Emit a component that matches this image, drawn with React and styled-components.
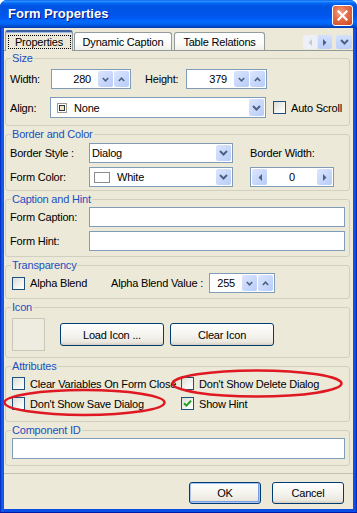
import React from "react";
import styled, { createGlobalStyle } from "styled-components";

const GlobalStyle = createGlobalStyle`
  html, body { margin: 0; padding: 0; background: #ffffff; }
  body {
    font-family: "Liberation Sans", Arial, sans-serif;
    font-size: 11px;
    color: #000;
    letter-spacing: -0.2px;
  }
  *, *::before, *::after { box-sizing: border-box; }
`;

const Window = styled.div`
  position: relative;
  width: 357px;
  height: 513px;
  display: flex;
  flex-direction: column;
  background: linear-gradient(to right, #0019a8 0, #0a4ee4 1px, #1a5ef0 3px, #0a4ee4 4px, #0a4ee4 353px, #1553e8 354px, #0a46d8 356px, #0019a8 357px);
  border-radius: 7px 7px 0 0;
  overflow: hidden;
  box-shadow: inset 0 -1px #0019a8;
`;

const TitleBar = styled.div`
  height: 28px;
  flex: none;
  display: flex;
  align-items: flex-start;
  justify-content: space-between;
  padding: 0 4px 0 8px;
  background: linear-gradient(
    to bottom,
    #0058ee 0%, #3593ff 4%, #288eff 6%, #127dff 8%, #036ffc 10%,
    #0262ee 14%, #0057e5 20%, #0054e3 24%, #0055eb 56%, #005bf5 66%,
    #026afe 76%, #0062ef 86%, #0052d6 92%, #0046c4 96%, #003ab0 100%
  );
`;

const TitleText = styled.div`
  margin-top: 6px;
  font-size: 13px;
  font-weight: bold;
  line-height: 16px;
  letter-spacing: 0;
  color: #ffffff;
  text-shadow: 1px 1px 0 #0a1883;
`;

const CloseButton = styled.div`
  margin-top: 5px;
  width: 21px;
  height: 21px;
  border: 1px solid #ffffff;
  border-radius: 3px;
  background: radial-gradient(circle at 40% 35%, #f3a58c 0%, #e4704c 40%, #cc4520 100%);
  display: flex;
  align-items: center;
  justify-content: center;
`;

const Client = styled.div`
  flex: 1;
  margin: 0 4px 4px;
  background: #ece9d8;
  display: flex;
  flex-direction: column;
`;

const TabStrip = styled.div`
  height: 22px;
  flex: none;
  display: flex;
  align-items: flex-end;
  padding: 0 1px 0 1px;
  position: relative;
  z-index: 1;
`;

const Tab = styled.div`
  flex: none;
  width: ${(p) => p.$w}px;
  height: ${(p) => (p.$active ? 21 : 18)}px;
  margin-left: ${(p) => p.$ml || 0}px;
  margin-bottom: ${(p) => (p.$active ? -1 : 0)}px;
  border: 1px solid #919b9c;
  border-bottom: none;
  border-radius: 3px 3px 0 0;
  background: ${(p) =>
    p.$active ? "#ece9d8" : "linear-gradient(#ffffff, #fbfbf9 60%, #f0efe9)"};
  display: flex;
  align-items: center;
  justify-content: center;
  white-space: nowrap;
  ${(p) =>
    p.$active &&
    `border-top: 2px solid #3c62a6; box-shadow: inset 0 1px #9db8e6; padding-top: 0;`}
`;

const FocusBox = styled.div`
  width: 63px;
  height: 14px;
  border: 1px dotted #000;
  display: flex;
  align-items: center;
  justify-content: center;
  line-height: 12px;
`;

const ScrollGroup = styled.div`
  margin-left: auto;
  margin-bottom: 1px;
  display: flex;
  gap: 1px;
`;

const ScrollBtn = styled.div`
  width: ${(p) => p.$w}px;
  height: 14px;
  margin-left: ${(p) => p.$ml || 0}px;
  border-radius: 2px;
  background: ${(p) =>
    p.$disabled ? "#eef0f7" : "linear-gradient(#d3e0fd, #bccffa)"};
  display: flex;
  align-items: center;
  justify-content: center;
`;

const Panel = styled.div`
  flex: none;
  height: 424px;
  border-top: 1px solid #919b9c;
  border-bottom: 1px solid #c4c1b2;
  padding: 1px 3px 7px 1px;
  display: flex;
  flex-direction: column;
  gap: 2px;
`;

const Group = styled.fieldset`
  margin: 0;
  padding: 0;
  min-width: 0;
  border: 1px solid #d0d0bf;
  border-radius: 3px;
`;

const Legend = styled.legend`
  margin-left: 5px;
  padding: 0 1px;
  font-size: 11px;
  line-height: 13px;
  color: #1a50c0;
`;

const GroupBody = styled.div`
  padding: ${(p) => p.$pad};
  display: flex;
  flex-direction: column;
  gap: ${(p) => p.$gap || 0}px;
`;

const Row = styled.div`
  display: flex;
  align-items: center;
  height: ${(p) => p.$h}px;
`;

const FormGrid = styled.div`
  display: grid;
  grid-template-columns: ${(p) => p.$cols};
  grid-auto-rows: 20px;
  row-gap: 4px;
  align-items: center;
`;

const Label = styled.span`
  flex: none;
  width: ${(p) => (p.$w ? `${p.$w}px` : "auto")};
  margin-left: ${(p) => p.$ml || 0}px;
  white-space: nowrap;
`;

const SpinBox = styled.div`
  flex: none;
  width: ${(p) => p.$w}px;
  height: 20px;
  border: 1px solid #7f9db9;
  background: #ffffff;
  padding: 1px;
  display: flex;
  align-items: stretch;
`;

const SpinValue = styled.div`
  flex: 1;
  display: flex;
  align-items: center;
  justify-content: ${(p) => (p.$center ? "center" : "flex-end")};
  padding-right: ${(p) => (p.$center ? 0 : 7)}px;
`;

const SpinBtn = styled.div`
  flex: none;
  width: 15px;
  margin-left: ${(p) => p.$ml || 0}px;
  border-radius: 2px;
  background: linear-gradient(135deg, #dbe5fd, #b8ccf9);
  display: flex;
  align-items: center;
  justify-content: center;
`;

const Combo = styled.div`
  flex: none;
  width: ${(p) => (p.$w ? `${p.$w}px` : "auto")};
  height: ${(p) => p.$h || 20}px;
  border: 1px solid #7f9db9;
  background: #ffffff;
  padding: 1px;
  display: flex;
  align-items: stretch;
`;

const ComboText = styled.div`
  flex: 1;
  display: flex;
  align-items: center;
  gap: 7px;
  padding-left: ${(p) => p.$pl || 0}px;
`;

const DropBtn = styled.div`
  flex: none;
  width: 15px;
  border-radius: 2px;
  background: linear-gradient(135deg, #dbe5fd, #b8ccf9);
  display: flex;
  align-items: center;
  justify-content: center;
`;

const Swatch = styled.span`
  width: 16px;
  height: 11px;
  border: 1px solid #8c8c8c;
  background: #ffffff;
`;

const TextBox = styled.div`
  width: ${(p) => (p.$w ? `${p.$w}px` : "auto")};
  height: ${(p) => p.$h || 20}px;
  margin-left: ${(p) => p.$ml || 0}px;
  border: 1px solid #7f9db9;
  background: #ffffff;
`;

const Check = styled.span`
  flex: none;
  width: 13px;
  height: 13px;
  margin-left: ${(p) => p.$ml || 0}px;
  border: 1px solid #1c5180;
  background: linear-gradient(135deg, #dcdcd5 0%, #f4f4f1 60%, #ffffff 100%);
  display: flex;
  align-items: center;
  justify-content: center;
`;

const CheckItem = styled.div`
  flex: none;
  width: ${(p) => (p.$w ? `${p.$w}px` : "auto")};
  margin-left: ${(p) => p.$ml || 0}px;
  display: flex;
  align-items: center;
  gap: 5px;
  white-space: nowrap;
`;

const IconWell = styled.div`
  flex: none;
  width: 33px;
  height: 33px;
  margin-left: 2px;
  border: 1px solid #cbc7b8;
  background: #eeebe0;
`;

const Button = styled.div`
  flex: none;
  width: ${(p) => p.$w}px;
  height: ${(p) => p.$h}px;
  margin-left: ${(p) => p.$ml || 0}px;
  border: 1px solid #003c74;
  border-radius: 3px;
  background: linear-gradient(#ffffff, #f5f4ef 50%, #ebe8df 85%, #d8d2c6);
  display: flex;
  align-items: center;
  justify-content: center;
  box-shadow: ${(p) =>
    p.$default
      ? "inset 0 0 0 1px #a9c4f0, inset -1px -1px 0 1px #7d9de6"
      : "inset 0 -1px #d6d0c5"};
`;

const Footer = styled.div`
  flex: 1;
  display: flex;
  justify-content: flex-end;
  align-items: flex-start;
  padding: 8px 9px 0 0;
  gap: 11px;
`;

const Annotations = styled.svg`
  position: absolute;
  left: 0;
  top: 0;
  pointer-events: none;
`;

const ArrowDown = () => (
  <svg width="7" height="5" viewBox="0 0 7 5">
    <path d="M0.8 1 L3.5 3.8 L6.2 1" fill="none" stroke="#4d6185" strokeWidth="1.6" />
  </svg>
);
const ArrowUp = () => (
  <svg width="7" height="5" viewBox="0 0 7 5">
    <path d="M0.8 4 L3.5 1.2 L6.2 4" fill="none" stroke="#4d6185" strokeWidth="1.6" />
  </svg>
);
const Chevron = () => (
  <svg width="9" height="6" viewBox="0 0 9 6">
    <path d="M1 1 L4.5 4.5 L8 1" fill="none" stroke="#4d6185" strokeWidth="2" />
  </svg>
);
const TriLeft = ({ color = "#4d6185" }) => (
  <svg width="4" height="7" viewBox="0 0 4 7">
    <path d="M4 0 L0.5 3.5 L4 7 Z" fill={color} />
  </svg>
);
const TriRight = ({ color = "#4d6185" }) => (
  <svg width="4" height="7" viewBox="0 0 4 7">
    <path d="M0 0 L3.5 3.5 L0 7 Z" fill={color} />
  </svg>
);
const AlignIcon = () => (
  <svg width="10" height="10" viewBox="0 0 10 10">
    <rect x="0.5" y="0.5" width="9" height="9" fill="none" stroke="#333" strokeWidth="1" strokeDasharray="1 1" />
    <rect x="2.5" y="2.5" width="5" height="5" fill="#ece6c8" stroke="#333" strokeWidth="1" />
  </svg>
);
const CheckMark = () => (
  <svg width="9" height="9" viewBox="0 0 9 9">
    <path d="M1 4.2 L3.4 6.6 L8 1.8" fill="none" stroke="#21a121" strokeWidth="2" />
  </svg>
);

const VSpin = ({ w, value }) => (
  <SpinBox $w={w}>
    <SpinValue>{value}</SpinValue>
    <SpinBtn><ArrowDown /></SpinBtn>
    <SpinBtn $ml={1}><ArrowUp /></SpinBtn>
  </SpinBox>
);

export default function App() {
  return (
    <>
      <GlobalStyle />
      <Window>
        <TitleBar>
          <TitleText>Form Properties</TitleText>
          <CloseButton>
            <svg width="11" height="11" viewBox="0 0 11 11">
              <path d="M1.5 1.5 L9.5 9.5 M9.5 1.5 L1.5 9.5" stroke="#ffffff" strokeWidth="2.2" strokeLinecap="square" />
            </svg>
          </CloseButton>
        </TitleBar>

        <Client>
          <TabStrip>
            <Tab $active $w={68}>
              <FocusBox>Properties</FocusBox>
            </Tab>
            <Tab $w={98} $ml={1}>Dynamic Caption</Tab>
            <Tab $w={91} $ml={2}>Table Relations</Tab>
            <ScrollGroup>
              <ScrollBtn $w={14} $disabled><TriLeft color="#c5cad8" /></ScrollBtn>
              <ScrollBtn $w={14}><TriRight /></ScrollBtn>
              <ScrollBtn $w={16} $ml={3}><Chevron /></ScrollBtn>
            </ScrollGroup>
          </TabStrip>

          <Panel>
            <Group>
              <Legend>Size</Legend>
              <GroupBody $pad="4px 0 7px 4px" $gap={8}>
                <Row $h={20}>
                  <Label $w={41}>Width:</Label>
                  <VSpin w={80} value="280" />
                  <Label $w={41} $ml={14}>Height:</Label>
                  <VSpin w={81} value="379" />
                </Row>
                <Row $h={21}>
                  <Label $w={40}>Align:</Label>
                  <Combo $w={216} $h={21}>
                    <ComboText $pl={5}>
                      <AlignIcon />
                      None
                    </ComboText>
                    <DropBtn><Chevron /></DropBtn>
                  </Combo>
                  <CheckItem $ml={7}>
                    <Check />
                    Auto Scroll
                  </CheckItem>
                </Row>
              </GroupBody>
            </Group>

            <Group>
              <Legend>Border and Color</Legend>
              <GroupBody $pad="2px 0 3px 4px">
                <FormGrid $cols="79px 161px 84px">
                  <Label>Border Style :</Label>
                  <Combo $w={144}>
                    <ComboText $pl={1}>Dialog</ComboText>
                    <DropBtn><Chevron /></DropBtn>
                  </Combo>
                  <Label>Border Width:</Label>
                  <Label>Form Color:</Label>
                  <Combo $w={144}>
                    <ComboText $pl={3}>
                      <Swatch />
                      White
                    </ComboText>
                    <DropBtn><Chevron /></DropBtn>
                  </Combo>
                  <SpinBox $w={84}>
                    <SpinBtn><TriLeft /></SpinBtn>
                    <SpinValue $center>0</SpinValue>
                    <SpinBtn><TriRight /></SpinBtn>
                  </SpinBox>
                </FormGrid>
              </GroupBody>
            </Group>

            <Group>
              <Legend>Caption and Hint</Legend>
              <GroupBody $pad="1px 0 5px 4px">
                <FormGrid $cols="79px 256px">
                  <Label>Form Caption:</Label>
                  <TextBox $w={256} />
                  <Label>Form Hint:</Label>
                  <TextBox $w={256} />
                </FormGrid>
              </GroupBody>
            </Group>

            <Group>
              <Legend>Transparency</Legend>
              <GroupBody $pad="1px 0 5px 4px">
                <Row $h={20}>
                  <CheckItem $w={99} $ml={2}>
                    <Check />
                    Alpha Blend
                  </CheckItem>
                  <Label $w={98}>Alpha Blend Value :</Label>
                  <VSpin w={66} value="255" />
                </Row>
              </GroupBody>
            </Group>

            <Group>
              <Legend>Icon</Legend>
              <GroupBody $pad="4px 0 6px 4px">
                <Row $h={33}>
                  <IconWell />
                  <Button $w={104} $h={23} $ml={15}>Load Icon ...</Button>
                  <Button $w={104} $h={23} $ml={6}>Clear Icon</Button>
                </Row>
              </GroupBody>
            </Group>

            <Group>
              <Legend>Attributes</Legend>
              <GroupBody $pad="4px 0 11px 4px" $gap={7}>
                <Row $h={13}>
                  <CheckItem $w={169} $ml={2}>
                    <Check />
                    Clear Variables On Form Close
                  </CheckItem>
                  <CheckItem>
                    <Check />
                    Don't Show Delete Dialog
                  </CheckItem>
                </Row>
                <Row $h={13}>
                  <CheckItem $w={169} $ml={2}>
                    <Check />
                    Don't Show Save Dialog
                  </CheckItem>
                  <CheckItem>
                    <Check>
                      <CheckMark />
                    </Check>
                    Show Hint
                  </CheckItem>
                </Row>
              </GroupBody>
            </Group>

            <Group>
              <Legend>Component ID</Legend>
              <GroupBody $pad="1px 0 6px 4px">
                <TextBox $w={333} $h={21} $ml={2} />
              </GroupBody>
            </Group>
          </Panel>

          <Footer>
            <Button $w={72} $h={22} $default>OK</Button>
            <Button $w={72} $h={22}>Cancel</Button>
          </Footer>
        </Client>

        <Annotations width="357" height="513" viewBox="0 0 357 513">
          <ellipse cx="257" cy="383.5" rx="84.5" ry="13" fill="none" stroke="#e01822" strokeWidth="2.5" />
          <ellipse cx="84.5" cy="402.5" rx="80" ry="12.5" fill="none" stroke="#e01822" strokeWidth="2.5" />
        </Annotations>
      </Window>
    </>
  );
}
